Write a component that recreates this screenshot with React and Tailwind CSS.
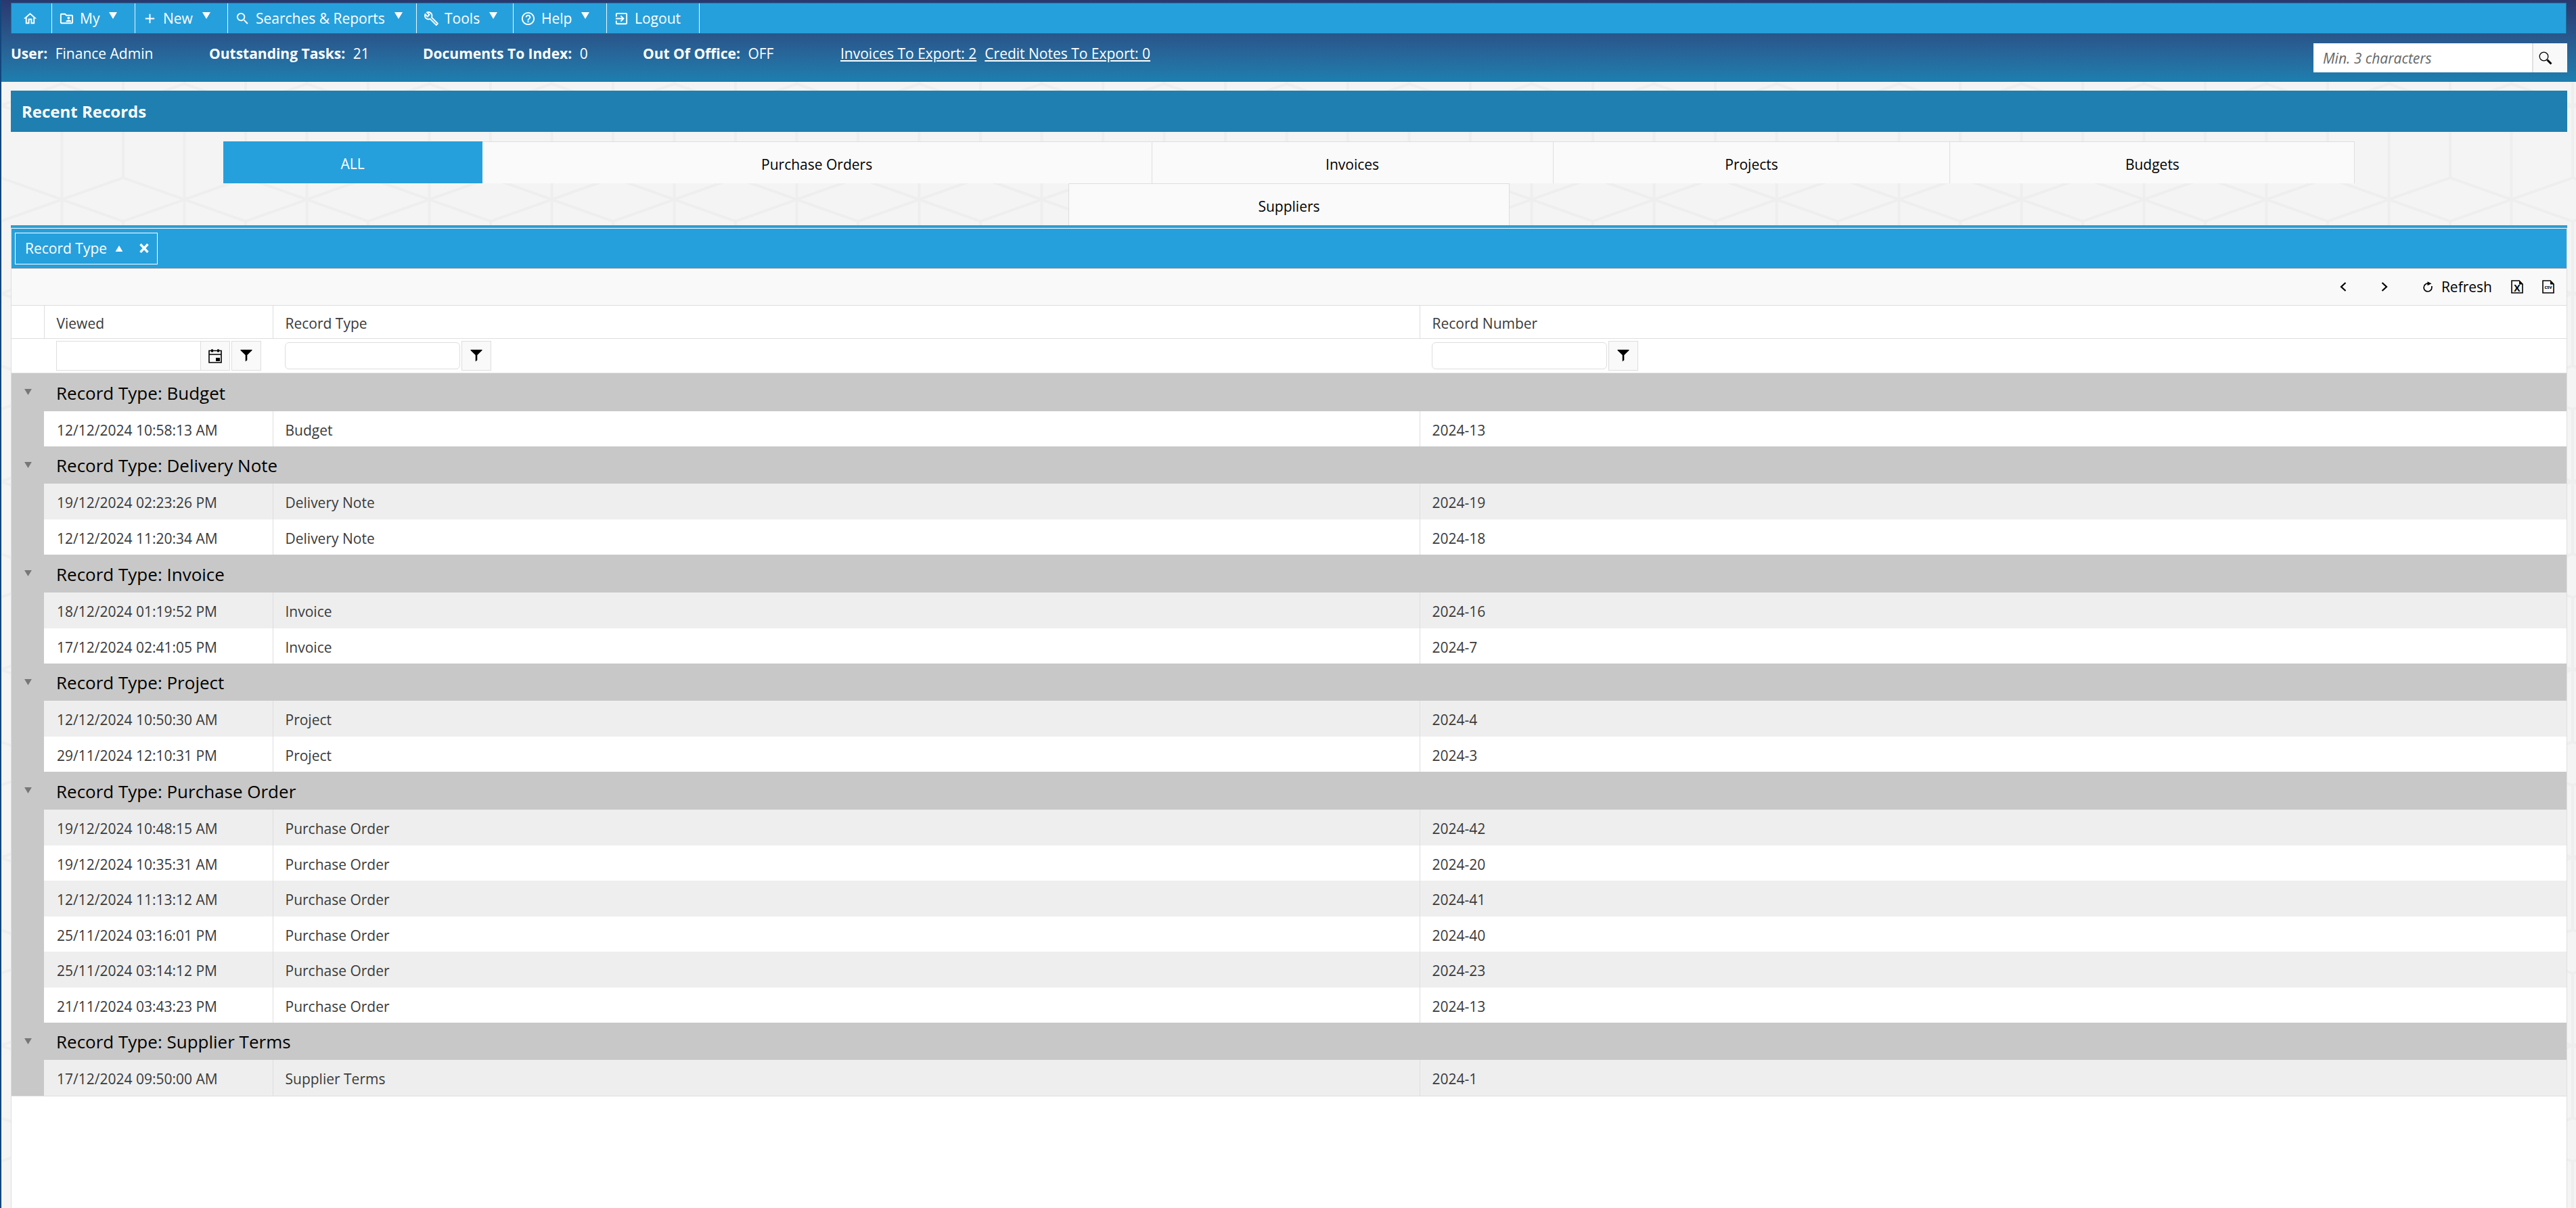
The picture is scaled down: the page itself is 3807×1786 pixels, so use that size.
import React, { useState } from 'react';
import {
  MdAdd,
  MdExitToApp,
  MdHelpOutline,
  MdOutlineBuild,
  MdOutlineFolderShared,
  MdOutlineHome,
  MdSearch,
} from 'react-icons/md';

const menuItems = [
  { label: 'My', icon: MdOutlineFolderShared, dropdown: true, width: 'w-[123px]' },
  { label: 'New', icon: MdAdd, dropdown: true, width: 'w-[137px]' },
  { label: 'Searches & Reports', icon: MdSearch, dropdown: true, width: 'w-[279px]' },
  { label: 'Tools', icon: MdOutlineBuild, dropdown: true, width: 'w-[143px]' },
  { label: 'Help', icon: MdHelpOutline, dropdown: true, width: 'w-[138px]' },
  { label: 'Logout', icon: MdExitToApp, dropdown: false, width: 'w-[137px]' },
];

const tabs = [
  { label: 'ALL', width: 'w-[10.14%]' },
  { label: 'Purchase Orders', width: 'w-[26.2%]' },
  { label: 'Invoices', width: 'w-[15.7%]' },
  { label: 'Projects', width: 'w-[15.53%]' },
  { label: 'Budgets', width: 'w-[15.83%]' },
  { label: 'Suppliers', width: 'w-[17.25%]' },
];

const groups = [
  { type: 'Budget', rows: [['12/12/2024 10:58:13 AM', '2024-13']] },
  {
    type: 'Delivery Note',
    rows: [
      ['19/12/2024 02:23:26 PM', '2024-19'],
      ['12/12/2024 11:20:34 AM', '2024-18'],
    ],
  },
  {
    type: 'Invoice',
    rows: [
      ['18/12/2024 01:19:52 PM', '2024-16'],
      ['17/12/2024 02:41:05 PM', '2024-7'],
    ],
  },
  {
    type: 'Project',
    rows: [
      ['12/12/2024 10:50:30 AM', '2024-4'],
      ['29/11/2024 12:10:31 PM', '2024-3'],
    ],
  },
  {
    type: 'Purchase Order',
    rows: [
      ['19/12/2024 10:48:15 AM', '2024-42'],
      ['19/12/2024 10:35:31 AM', '2024-20'],
      ['12/12/2024 11:13:12 AM', '2024-41'],
      ['25/11/2024 03:16:01 PM', '2024-40'],
      ['25/11/2024 03:14:12 PM', '2024-23'],
      ['21/11/2024 03:43:23 PM', '2024-13'],
    ],
  },
  { type: 'Supplier Terms', rows: [['17/12/2024 09:50:00 AM', '2024-1']] },
];

// light cube pattern behind the whole page
function Backdrop() {
  return (
    <svg className="absolute inset-0 -z-10 h-full w-full" aria-hidden="true">
      <defs>
        <pattern id="cubes" x="-1" y="156" width="181" height="278" patternUnits="userSpaceOnUse">
          <path
            d="M0 0L90.5 32L181 0M90.5 32V246M0 0V107M181 0V107M0 107L90.5 139L181 107M0 171L90.5 139L181 171M0 171V278M181 171V278M90.5 246L0 278M90.5 246L181 278"
            fill="none"
            stroke="#eeeeee"
            strokeWidth="4"
          />
        </pattern>
      </defs>
      <rect width="100%" height="100%" fill="#f4f4f4" />
      <rect width="100%" height="100%" fill="url(#cubes)" />
    </svg>
  );
}

function Triangle({ up, className }) {
  return (
    <svg viewBox="0 0 12 10" className={className} fill="currentColor" aria-hidden="true">
      <path d={up ? 'M6 0L12 10H0Z' : 'M0 0H12L6 10Z'} />
    </svg>
  );
}

function FunnelIcon() {
  return (
    <svg viewBox="0 0 18 18" className="h-[18px] w-[18px]" fill="currentColor" aria-hidden="true">
      <path d="M0.5 0H17.5V1L10.3 8V15.5L7.7 17.5V8L0.5 1Z" />
    </svg>
  );
}

function CalendarIcon() {
  return (
    <svg viewBox="0 0 20 21" className="h-[21px] w-5" aria-hidden="true">
      <path d="M1 2.5H19V20H1ZM1 8H19" fill="none" stroke="currentColor" strokeWidth="1.6" />
      <path d="M4 0.5H7V4.5H4ZM13 0.5H16V4.5H13ZM11 13H17V18H11Z" fill="currentColor" />
    </svg>
  );
}

function FileIcon({ text, size }) {
  return (
    <svg viewBox="0 0 18 20" className="h-5 w-[18px]" aria-hidden="true">
      <path d="M1 1H12L17 6V19H1Z" fill="none" stroke="currentColor" strokeWidth="1.6" />
      <path d="M12 0.5L17.5 6V6.5H12Z" fill="currentColor" />
      <text
        x="9"
        y={size > 10 ? 17 : 13}
        textAnchor="middle"
        fontSize={size}
        fontWeight="700"
        fill="currentColor"
      >
        {text}
      </text>
    </svg>
  );
}

function Header() {
  return (
    <header className="flex h-[121px] flex-col bg-linear-to-b from-[#29386f] to-[#1d7fb0] pt-1 text-white">
      <nav className="mr-[14px] ml-[14px] flex h-[46px] border border-[#1d7099] bg-[#26a0dc]">
        <a href="#home" aria-label="Home" className="flex w-[60px] items-center border-r border-white/90 pl-4">
          <MdOutlineHome className="size-[23px]" />
        </a>
        {menuItems.map(({ label, icon: Icon, dropdown, width }) => (
          <button
            key={label}
            type="button"
            className={`flex items-center border-r border-white/90 pl-[10px] ${width}`}
          >
            <Icon className="size-[23px] shrink-0" />
            <span className="ml-2 whitespace-nowrap">{label}</span>
            {dropdown && <Triangle className="mb-2 ml-[14px] h-[10px] w-3" />}
          </button>
        ))}
      </nav>

      <div className="flex h-[70px] justify-between pr-[13px] pl-[14px]">
        <div className="flex pt-[15px] leading-7">
          <p className="w-[293px]">
            <b>User:</b> <span className="ml-1.5">Finance Admin</span>
          </p>
          <p className="w-[316px]">
            <b>Outstanding Tasks:</b> <span className="ml-1.5">21</span>
          </p>
          <p className="w-[325px]">
            <b>Documents To Index:</b> <span className="ml-1.5">0</span>
          </p>
          <p className="w-[292px]">
            <b>Out Of Office:</b> <span className="ml-1.5">OFF</span>
          </p>
          <a href="#invoices" className="mr-3 underline">Invoices To Export: 2</a>
          <a href="#credit-notes" className="underline">Credit Notes To Export: 0</a>
        </div>
        <form className="mt-[14px] flex h-[43px] w-[375px] bg-white" onSubmit={(e) => e.preventDefault()}>
          <input
            type="text"
            aria-label="Search"
            placeholder="Min. 3 characters"
            className="min-w-0 flex-1 px-[14px] text-[#444] italic placeholder:text-[#666]"
          />
          <button
            type="submit"
            aria-label="Search"
            className="flex w-[52px] items-center border-l-2 border-[#e0e0e0] bg-[#f9f9f9] pl-2 text-black"
          >
            <svg viewBox="0 0 20 20" className="size-5" fill="none" stroke="currentColor" aria-hidden="true">
              <circle cx="7.5" cy="7.5" r="6.3" strokeWidth="1.3" />
              <path d="M12.5 12.5L18.5 18.5" strokeWidth="3" />
            </svg>
          </button>
        </form>
      </div>
    </header>
  );
}

function FilterButton({ label }) {
  return (
    <button
      type="button"
      aria-label={label}
      className="flex size-11 items-center justify-center border border-[#dedede] bg-[#f9f9f9] text-black"
    >
      <FunnelIcon />
    </button>
  );
}

function TextFilter({ label }) {
  return (
    <div className="flex items-center gap-[2px]">
      <input
        type="text"
        aria-label={label}
        className="h-10 w-[259px] rounded-md border border-[#dedede] bg-white px-2"
      />
      <FilterButton label={`${label} options`} />
    </div>
  );
}

function RecordsTable() {
  let index = 0;

  return (
    <table className="w-full table-fixed border-collapse text-left text-[#3a3a3a]">
      <colgroup>
        <col className="w-12" />
        <col className="w-[338px]" />
        <col />
        <col />
      </colgroup>
      <thead>
        <tr className="h-[49px] border-t border-b border-[#dedede]">
          <td></td>
          <th className="border-l border-[#dedede] pt-1 pl-[18px] font-normal">Viewed</th>
          <th className="border-l border-[#dedede] pt-1 pl-[18px] font-normal">Record Type</th>
          <th className="border-l border-[#dedede] pt-1 pl-[18px] font-normal">Record Number</th>
        </tr>
        <tr className="h-[51px] border-b border-[#dedede]">
          <td></td>
          <td className="pl-[18px]">
            <div className="flex items-center gap-[2px]">
              <div className="flex h-11 w-[257px] border border-[#dedede]">
                <input type="text" aria-label="Viewed filter" className="min-w-0 flex-1 bg-white px-2" />
                <button
                  type="button"
                  aria-label="Pick a date"
                  className="flex w-[43px] items-center justify-center border-l border-[#dedede] bg-[#f9f9f9] text-black"
                >
                  <CalendarIcon />
                </button>
              </div>
              <FilterButton label="Viewed filter options" />
            </div>
          </td>
          <td className="pl-[18px]">
            <TextFilter label="Record type filter" />
          </td>
          <td className="pl-[18px]">
            <TextFilter label="Record number filter" />
          </td>
        </tr>
      </thead>
      {groups.map(({ type, rows }) => (
        <tbody key={type} className="group">
          <tr className="h-14 bg-[#c8c8c8] text-black group-even:h-[55px]">
            <td>
              <button type="button" aria-label={`Collapse ${type}`} className="block pl-[19px] text-[#777]">
                <Triangle className="h-[9px] w-[11px]" />
              </button>
            </td>
            <th colSpan={3} className="pt-[2px] pl-[18px] text-[26px] font-normal">Record Type: {type}</th>
          </tr>
          {rows.map(([viewed, number]) => {
            const alt = index++ % 2 === 1;
            return (
              <tr key={viewed} className={alt ? 'h-[53px] bg-[#eeeeee]' : 'h-[52px] bg-white'}>
                <td className="bg-[#c8c8c8]"></td>
                <td className="pt-1 pl-[19px]">{viewed}</td>
                <td className="border-l border-[#dedede] pt-1 pl-[18px]">{type}</td>
                <td className="border-l border-[#dedede] pt-1 pl-[18px]">{number}</td>
              </tr>
            );
          })}
        </tbody>
      ))}
    </table>
  );
}

function App() {
  const [activeTab, setActiveTab] = useState('ALL');

  return (
    <div className="relative isolate flex min-h-screen flex-col border-l-2 border-[#12467d] font-['Open_Sans',sans-serif] text-[21px] leading-7">
      <Backdrop />
      <Header />

      <main className="mr-[13px] ml-[14px] flex flex-1 flex-col pt-[13px]">
        <h1 className="flex h-[61px] items-center bg-[#1f7fb0] pl-4 text-2xl font-bold text-white">
          Recent Records
        </h1>

        <div role="tablist" className="mt-[14px] flex flex-wrap justify-center border-b-4 border-[#309cd0]">
          {tabs.map(({ label, width }) => (
            <button
              key={label}
              type="button"
              role="tab"
              aria-selected={activeTab === label}
              onClick={() => setActiveTab(label)}
              className={`h-[62px] pt-1 ${width} ${
                activeTab === label
                  ? 'bg-[#26a0dc] text-white'
                  : 'border-t border-r border-[#dedede] bg-[#fafafa] text-black'
              } ${label === 'Suppliers' ? 'border-l' : ''}`}
            >
              {label}
            </button>
          ))}
        </div>

        <section className="flex flex-1 flex-col border-x border-[#dedede] bg-white">
          <div className="flex h-[60px] items-center border-t border-b border-t-white border-b-[#6f8ba3] bg-[#26a0dc] pl-[5px] text-white">
            <div className="flex h-[47px] w-[211px] items-center border border-white pl-[14px]">
              Record Type
              <Triangle up className="ml-3 h-[9px] w-3" />
              <button type="button" aria-label="Remove grouping" className="ml-6">
                <svg viewBox="0 0 14 14" className="size-[14px]" stroke="currentColor" strokeWidth="3.4" aria-hidden="true">
                  <path d="M1.5 1L12.5 13M12.5 1L1.5 13" />
                </svg>
              </button>
            </div>
          </div>

          <div className="flex h-[54px] items-center justify-end bg-[#f9f9f9] pr-[18px] text-black">
            <button type="button" aria-label="Previous" className="mr-[51px]">
              <svg viewBox="0 0 10 14" className="h-[14px] w-[10px]" fill="none" stroke="currentColor" strokeWidth="2.2" aria-hidden="true">
                <path d="M8.5 1L2 7L8.5 13" />
              </svg>
            </button>
            <button type="button" aria-label="Next" className="mr-[51px]">
              <svg viewBox="0 0 10 14" className="h-[14px] w-[10px]" fill="none" stroke="currentColor" strokeWidth="2.2" aria-hidden="true">
                <path d="M1.5 1L8 7L1.5 13" />
              </svg>
            </button>
            <button type="button" className="mr-7 flex items-center gap-3">
              <svg viewBox="0 0 16 16" className="size-4" fill="none" stroke="currentColor" aria-hidden="true">
                <path d="M10 3.2H8A5.9 5.9 0 1 0 13.9 9V7" strokeWidth="1.7" />
                <path d="M7.5 0.2L13.5 3.2L7.5 6.2Z" fill="currentColor" stroke="none" />
              </svg>
              Refresh
            </button>
            <button type="button" aria-label="Export to Excel" className="mr-7">
              <FileIcon text="X" size={14} />
            </button>
            <button type="button" aria-label="Export to CSV">
              <FileIcon text="csv" size={7} />
            </button>
          </div>

          <RecordsTable />
          <div className="border-t border-[#dedede]"></div>
        </section>
      </main>
    </div>
  );
}

export default App;
